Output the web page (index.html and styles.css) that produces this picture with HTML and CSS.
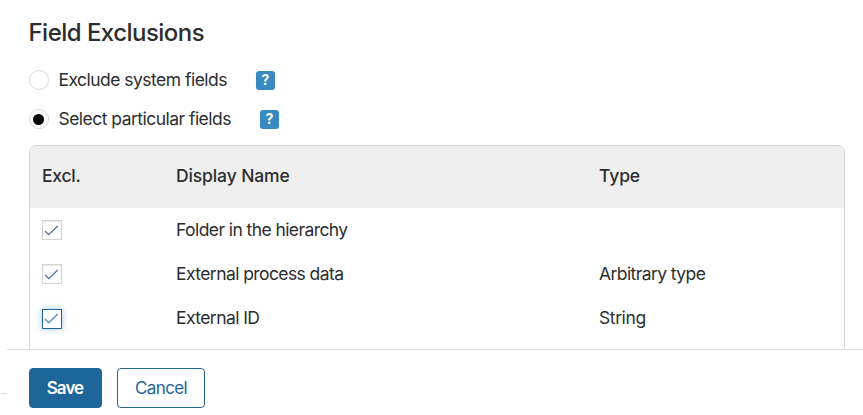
FILE: index.html
```html
<!DOCTYPE html>
<html lang="en">
<head>
<meta charset="utf-8">
<title>Field Exclusions</title>
<link rel="stylesheet" href="styles.css">
</head>
<body>
<div class="page">
  <div class="backdrop"></div>
  <main class="dialog">
    <section class="content">
      <h1 class="title">Field Exclusions</h1>
      <div class="option">
        <span class="radio"></span>
        <span class="option-label exclude">Exclude system fields</span>
        <span class="help">?</span>
      </div>
      <div class="option">
        <span class="radio checked"></span>
        <span class="option-label select">Select particular fields</span>
        <span class="help">?</span>
      </div>
      <div class="table">
        <div class="row head">
          <span class="narrow">Excl.</span><span>Display Name</span><span>Type</span>
        </div>
        <div class="row">
          <span class="check"><svg viewBox="0 0 20 20"><path d="M3 11 6.8 14.6 15.8 6"/></svg></span>
          <span>Folder in the hierarchy</span><span></span>
        </div>
        <div class="row">
          <span class="check"><svg viewBox="0 0 20 20"><path d="M3 11 6.8 14.6 15.8 6"/></svg></span>
          <span>External process data</span><span>Arbitrary type</span>
        </div>
        <div class="row">
          <span class="check focused"><svg viewBox="0 0 20 20"><path d="M3 10 6.8 13.6 15.8 5"/></svg></span>
          <span>External ID</span><span class="narrow">String</span>
        </div>
      </div>
    </section>
    <footer class="footer">
      <button class="btn primary">Save</button>
      <button class="btn">Cancel</button>
    </footer>
  </main>
</div>
</body>
</html>
```
FILE: styles.css
```css
* { box-sizing: border-box; }
body {
  margin: 0;
  background: #fff;
  color: #2c2d2f;
  font: 17.5px/24px Inter, sans-serif;
  letter-spacing: -0.58px;
  white-space: nowrap;
}
.page { display: flex; height: 415px; overflow: hidden; }
.backdrop { width: 7px; height: 394px; border-bottom: 1px solid #e2e2e2; }
.dialog { flex: 1; display: flex; flex-direction: column; }
.content { height: 349px; padding: 18px 18px 0 22px; overflow: hidden; }
.title { margin: 0 0 18px; font-size: 24px; line-height: 29px; font-weight: 500; letter-spacing: -0.53px; text-indent: -0.5px; }
.option { display: flex; align-items: center; height: 30px; margin-bottom: 9px; }
.radio {
  display: flex; align-items: center; justify-content: center;
  width: 20px; height: 20px; margin-right: 9.5px;
  border: 1px solid #d8d8d8; border-radius: 50%;
}
.radio.checked { height: 20px; padding: 1px 1px 0 0; }
.radio.checked::after { content: ""; width: 11px; height: 11px; border-radius: 50%; background: #000; }
.help {
  width: 19px; height: 19px; margin-left: 29.5px;
  border-radius: 3px; background: #388ac0; color: #fff;
  font-size: 14px; line-height: 18px; font-weight: 700; letter-spacing: 0; text-align: center;
}
.option-label { letter-spacing: -0.53px; }
.option-label.exclude { width: 168px; }
.option-label.select { width: 172px; }
.table { height: 240px; margin-top: 11px; border: 1px solid #d5d5d5; border-radius: 7px; overflow: hidden; }
.row { display: grid; grid-template-columns: 134px 423px 1fr; align-items: center; height: 44px; padding-left: 12px; }
.row.head { height: 62px; padding-bottom: 3px; background: #efefef; font-weight: 500; letter-spacing: -0.12px; }
.narrow { letter-spacing: -0.4px; }
.row.head .narrow { letter-spacing: -0.25px; }
.check { width: 20px; height: 20px; border: 1px solid #d5d5d5; box-shadow: inset 0 1px 2px #e4e4e4; }
.check svg { display: block; width: 20px; height: 20px; margin: -1px; fill: none; stroke: #4a719f; stroke-width: 1.2; }
.check.focused { position: relative; top: 1px; border-color: #1e6599; box-shadow: 0 0 6px #a6cbe4; }
.check.focused svg { stroke: #4886b6; }
.footer { display: flex; gap: 15px; height: 66px; padding: 18px 22px 0; border-top: 1px solid #e2e2e2; }
.btn {
  width: 88px; height: 40px; padding: 0; border: 1px solid #1e6599; border-radius: 4px;
  background: #fff; color: #1e6599; font: inherit; font-size: 17px; letter-spacing: -0.6px;
}
.btn.primary { width: 73px; padding-right: 1px; background: #1e6599; color: #fff; font-weight: 600; letter-spacing: -0.95px; }
```
